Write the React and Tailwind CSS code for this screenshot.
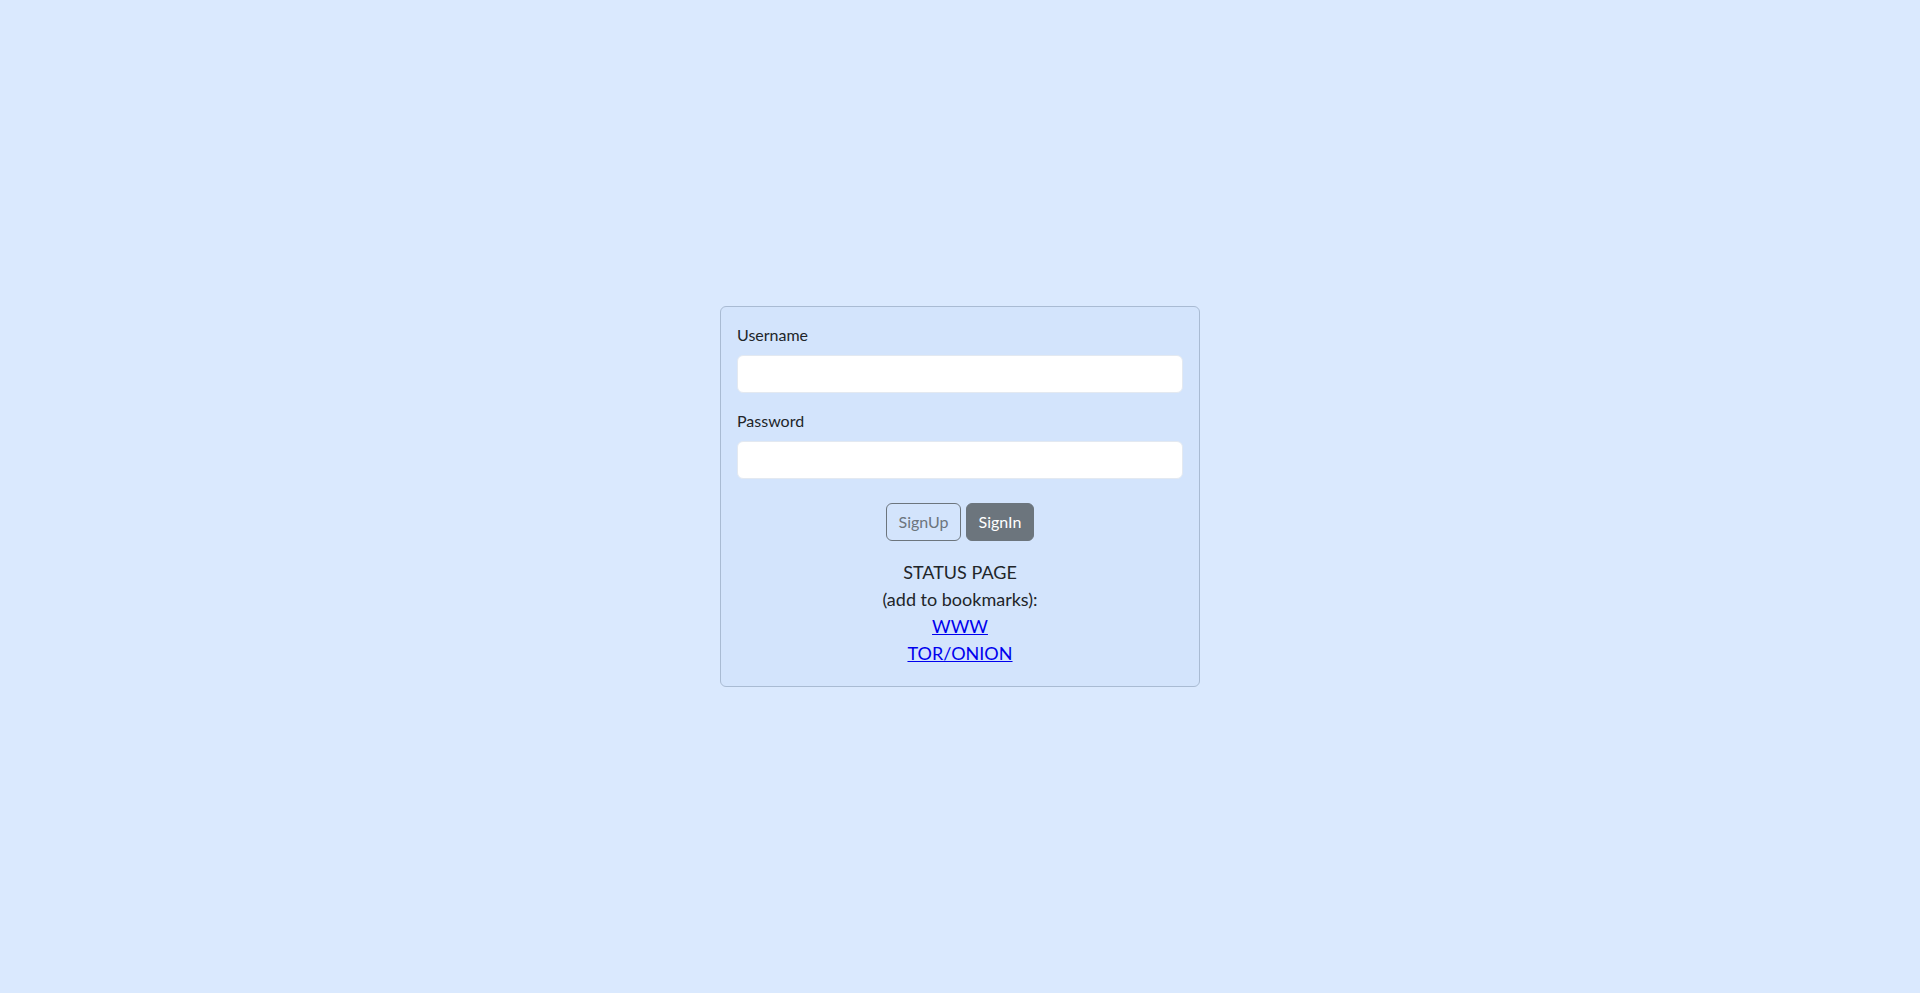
import React from "react";

export default function App() {
  return (
    <div className="flex h-[993px] w-full items-center justify-center bg-[#dae9fe] font-['Lato',sans-serif] text-[#212529]">
      <div className="w-[480px] rounded-md border border-[#a9bbd3] bg-[#d3e4fc] p-4 pb-[19px]">
        <label className="mb-2 block text-base leading-6">Username</label>
        <input
          type="text"
          className="mb-4 block h-[38px] w-full rounded-md border border-[#e3e9f1] bg-white px-3 text-base outline-none"
        />
        <label className="mb-2 block text-base leading-6">Password</label>
        <input
          type="password"
          className="block h-[38px] w-full rounded-md border border-[#e3e9f1] bg-white px-3 text-base outline-none"
        />
        <div className="mt-6 flex justify-center gap-[5px]">
          <button className="h-[38px] w-[75px] rounded-md border border-[#6c757d] text-base text-[#6c757d]">
            SignUp
          </button>
          <button className="h-[38px] w-[68px] rounded-md border border-[#6c757d] bg-[#6c757d] text-base text-white">
            SignIn
          </button>
        </div>
        <div className="mt-[18px] text-center text-[18px] leading-[27px]">
          <div>STATUS PAGE</div>
          <div>(add to bookmarks):</div>
          <div>
            <a href="#" className="text-[#0000ee] underline">WWW</a>
          </div>
          <div>
            <a href="#" className="text-[#0000ee] underline">TOR/ONION</a>
          </div>
        </div>
      </div>
    </div>
  );
}
